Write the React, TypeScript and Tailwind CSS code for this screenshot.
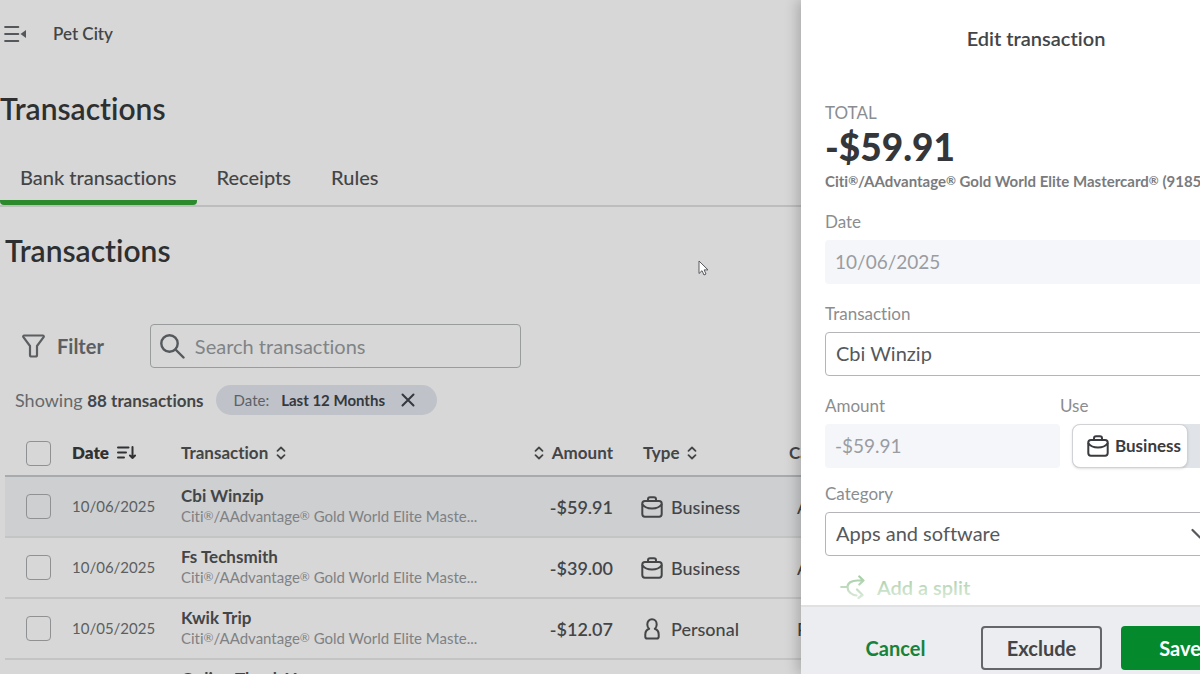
import React from "react";

type Kind = "Business" | "Personal";

type Row = {
  date: string;
  name: string;
  amount: string;
  kind: Kind;
  category: string;
};

const rows: Row[] = [
  { date: "10/06/2025", name: "Cbi Winzip", amount: "-$59.91", kind: "Business", category: "Apps and software" },
  { date: "10/06/2025", name: "Fs Techsmith", amount: "-$39.00", kind: "Business", category: "Apps and software" },
  { date: "10/05/2025", name: "Kwik Trip", amount: "-$12.07", kind: "Personal", category: "Personal" },
  { date: "10/05/2025", name: "Online Thank You", amount: "-$84.20", kind: "Personal", category: "Personal" },
];

function Reg() {
  return <span className="align-[2px] text-[12px] leading-none">®</span>;
}

function Account({ tail }: { tail: React.ReactNode }) {
  return (
    <>
      Citi
      <Reg />
      /AAdvantage
      <Reg /> Gold World Elite {tail}
    </>
  );
}

function Briefcase() {
  return (
    <svg width="22" height="22" viewBox="0 0 22 22" fill="none" stroke="currentColor" strokeWidth="2" strokeLinecap="round" strokeLinejoin="round" aria-hidden="true">
      <rect x="1.300" y="5" width="19.400" height="15.700" rx="2.600" />
      <path d="M7 4.700V3.300c0-1.100.9-2 2-2h4c1.100 0 2 .9 2 2v1.400" />
      <path d="M1.500 8.500c1.800 2.500 5 4 9.500 4s7.700-1.500 9.500-4" />
    </svg>
  );
}

function Person() {
  return (
    <svg width="22" height="22" viewBox="0 0 22 22" fill="none" stroke="currentColor" strokeWidth="2" strokeLinejoin="round" aria-hidden="true">
      <path d="M8.200 10.800C7 9.800 6.300 8.200 6.300 6.400 6.300 3.500 8.200 1.300 11 1.300s4.700 2.200 4.700 5.100c0 1.800-.7 3.400-1.900 4.400 2.400.9 3.900 3 3.900 5.700v2.200c0 1-.8 1.800-1.800 1.800H6.100c-1 0-1.800-.8-1.800-1.800v-2.200c0-2.700 1.500-4.800 3.900-5.700z" />
    </svg>
  );
}

function SortIcon() {
  return (
    <svg width="10" height="14" viewBox="0 0 10 14" fill="none" stroke="currentColor" strokeWidth="1.800" strokeLinecap="round" strokeLinejoin="round" aria-hidden="true">
      <path d="M1.500 4.800L5 1.500l3.500 3.300M1.500 9.200L5 12.500l3.500-3.300" />
    </svg>
  );
}

function Check({ label }: { label: string }) {
  return (
    <input
      type="checkbox"
      aria-label={label}
      className="block size-[25px] appearance-none rounded border border-[#8f9193] checked:bg-[#2a7d2a]"
    />
  );
}

function Tab({ label, active = false }: { label: string; active?: boolean }) {
  return (
    <button
      type="button"
      role="tab"
      aria-selected={active}
      className={
        active
          ? "h-[45px] rounded-sm border-b-[5px] border-[#2c8a2c] px-5 pb-1.5 text-xl leading-7 font-medium"
          : "h-[45px] border-b-[5px] border-transparent px-5 pb-1.5 text-xl leading-7 font-medium"
      }
    >
      {label}
    </button>
  );
}

function Transactions() {
  return (
    <main className="relative min-w-0 flex-1 overflow-hidden bg-[#d7d7d7] text-[#434547]">
      <header className="flex h-[68px] items-center gap-[26px] pl-1">
        <button type="button" aria-label="Collapse menu">
          <svg width="23" height="18" viewBox="0 0 23 18" fill="none" stroke="#55585a" strokeWidth="2.200" strokeLinecap="round" aria-hidden="true">
            <path d="M1.200 2h13M1.200 9h13M1.200 16h13" />
            <path d="M22 5v8l-5.500-4z" fill="#55585a" stroke="none" />
          </svg>
        </button>
        <span className="text-[17px] font-semibold">Pet City</span>
      </header>

      <h1 className="pt-5 text-[30px] leading-10 font-semibold text-[#2d2f31]">Transactions</h1>

      <div role="tablist" className="mt-8 flex border-b-2 border-[#bcbdbd]">
        <Tab label="Bank transactions" active />
        <Tab label="Receipts" />
        <Tab label="Rules" />
      </div>

      <h2 className="pt-[23px] pl-[5px] text-[30px] leading-10 font-semibold text-[#2d2f31]">Transactions</h2>

      <div className="mt-[54px] flex items-center gap-[46px] pl-[22px]">
        <button type="button" className="flex items-center gap-3 text-xl font-bold text-[#5b5f62]">
          <svg width="23" height="24" viewBox="0 0 23 24" fill="none" stroke="currentColor" strokeWidth="2.200" strokeLinejoin="round" aria-hidden="true">
            <path d="M2.200 1.500h18.600c.9 0 1.300 1 .8 1.700L15 12v9c0 1-.6 1.500-1.500 1.500h-4C8.600 22.500 8 22 8 21v-9L1.400 3.200c-.5-.7-.1-1.700.8-1.700z" />
          </svg>
          Filter
        </button>
        <label className="flex h-11 w-[371px] items-center gap-2.5 rounded border border-[#989c9c] px-[9px]">
          <svg width="25" height="25" viewBox="0 0 25 25" fill="none" stroke="#55595c" strokeWidth="2.400" strokeLinecap="round" aria-hidden="true">
            <circle cx="9.500" cy="9.500" r="8.200" />
            <path d="M15.500 15.500l8 8" />
          </svg>
          <input type="search" aria-label="Search transactions" placeholder="Search transactions" className="min-w-0 flex-1 bg-transparent text-xl outline-none placeholder:text-[#808487]" />
        </label>
      </div>

      <div className="mt-[17px] flex h-[30px] items-center gap-3 pl-[15px]">
        <p className="text-lg leading-7 text-[#66696b]">
          Showing <b className="text-[17px] font-bold text-[#434547]">88 transactions</b>
        </p>
        <span className="flex h-[30px] items-center rounded-full bg-[#bfc2c8] pr-[22px] pl-[18px] text-[15px]">
          <span className="mr-3 text-[#5d6167]">Date:</span>
          <span className="mr-4 font-bold text-[#35383c]">Last 12 Months</span>
          <button type="button" aria-label="Remove date filter">
            <svg width="14" height="14" viewBox="0 0 14 14" stroke="#35383c" strokeWidth="2" strokeLinecap="round" className="block" aria-hidden="true">
              <path d="M1.500 1.500l11 11M12.500 1.500l-11 11" />
            </svg>
          </button>
        </span>
      </div>

      <table className="mt-4 ml-[5px] w-[1100px] table-fixed border-collapse text-left">
        <colgroup>
          <col className="w-[67px]" />
          <col className="w-[109px]" />
          <col className="w-[315px]" />
          <col className="w-[117px]" />
          <col className="w-[176px]" />
          <col />
        </colgroup>
        <thead>
          <tr className="h-[45px] border-b-2 border-[#a7abad] text-[17px]">
            <th scope="col" className="pl-[21px]">
              <Check label="Select all transactions" />
            </th>
            <th scope="col" className="font-extrabold text-[#2f3133]">
              <span className="flex items-center gap-2">
                Date
                <svg width="19" height="14" viewBox="0 0 19 14" fill="none" stroke="currentColor" strokeWidth="2" strokeLinecap="round" strokeLinejoin="round" aria-hidden="true">
                  <path d="M1 1.500h10.500M1 6.500h8M1 11.500h6M15.500 1v11M13 9.500l2.500 2.500L18 9.500" />
                </svg>
              </span>
            </th>
            <th scope="col" className="font-bold">
              <span className="flex items-center gap-2">
                Transaction <SortIcon />
              </span>
            </th>
            <th scope="col" className="font-bold">
              <span className="flex items-center justify-end gap-2">
                <SortIcon /> Amount
              </span>
            </th>
            <th scope="col" className="pl-[30px] font-bold">
              <span className="flex items-center gap-2">
                Type <SortIcon />
              </span>
            </th>
            <th scope="col" className="font-bold">Category</th>
          </tr>
        </thead>
        <tbody>
          {rows.map((row, i) => (
            <tr
              key={row.name}
              className={i === 0 ? "h-[61px] border-b-2 border-[#c3c4c4] bg-[#cdcfd1]" : "h-[61px] border-b-2 border-[#c3c4c4]"}
            >
              <td className="pl-[21px]">
                <Check label={`Select ${row.name}`} />
              </td>
              <td className="text-[15px] text-[#5c5f61]">{row.date}</td>
              <td className="pb-0.5">
                <div className="text-[17px] leading-5 font-bold">{row.name}</div>
                <div className="text-[15px] leading-5 whitespace-nowrap text-[#7f8184]">
                  <Account tail="Maste..." />
                </div>
              </td>
              <td className="text-right text-lg leading-6 font-semibold">{row.amount}</td>
              <td className="pl-7">
                <span className="flex items-center gap-2 text-lg leading-6 font-medium">
                  {row.kind === "Business" ? <Briefcase /> : <Person />}
                  {row.kind}
                </span>
              </td>
              <td className="pl-2 text-lg leading-6 font-medium">{row.category}</td>
            </tr>
          ))}
        </tbody>
      </table>

      <svg width="12" height="16" viewBox="0 0 12 16" className="absolute top-[260px] left-[698px]" aria-hidden="true">
        <path d="M1 1v12.500l3-2.800 2 4.300 2-1-1.900-4.100H10z" fill="#fff" stroke="#55585c" strokeWidth="1" />
      </svg>
    </main>
  );
}

function EditPanel() {
  const label = "text-[17px] leading-5 text-[#8b8d90]";
  const readOnly = "mt-2 h-11 w-full rounded bg-[#f4f6f9] px-2.5 pb-0.5 text-[19px] text-[#9a9ca1] outline-none";
  const field = "mt-2 h-11 w-full rounded border border-[#b3b5b8] bg-white px-2.5 pb-0.5 text-xl text-[#56585b] outline-none";
  return (
    <aside className="z-10 w-[399px] shrink-0 overflow-clip bg-white shadow-[-4px_0_12px_rgba(0,0,0,0.2)]">
      <form className="flex h-full w-[470px] flex-col" onSubmit={(e) => e.preventDefault()}>
        <h2 className="py-6 text-center text-xl leading-[29px] font-semibold text-[#434548]">Edit transaction</h2>

        <div className="relative min-h-0 flex-1 overflow-hidden px-6 pt-6">
          <p className="text-[17px] leading-6 text-[#8b8d90]">TOTAL</p>
          <p className="mt-1 text-[37px] leading-9 font-black text-[#343639]">-$59.91</p>
          <p className="mt-1.5 text-[15px] leading-5 font-bold whitespace-nowrap text-[#797b7e]">
            <Account tail={<>Mastercard<Reg /> (9185)</>} />
          </p>

          <div className="mt-[21px] flex flex-col gap-5">
            <div className="flex flex-col">
              <label htmlFor="date" className={label}>Date</label>
              <input id="date" readOnly value="10/06/2025" className={readOnly} />
            </div>
            <div className="flex flex-col">
              <label htmlFor="name" className={label}>Transaction</label>
              <input id="name" defaultValue="Cbi Winzip" className={field} />
            </div>
            <div className="flex">
              <div className="flex w-[235px] flex-col">
                <label htmlFor="amount" className={label}>Amount</label>
                <input id="amount" readOnly value="-$59.91" className={readOnly} />
              </div>
              <div role="group" aria-labelledby="use" className="flex flex-1 flex-col">
                <span id="use" className={label}>Use</span>
                <div className="mt-2 ml-3 flex h-11 rounded-lg bg-[#e0e3e7]">
                  <button type="button" aria-pressed="true" className="flex w-[116px] items-center justify-end gap-1.5 rounded-lg border border-[#d0d2d5] bg-white pr-1.5 text-[17px] font-bold text-[#393b3e] shadow">
                    <Briefcase />
                    Business
                  </button>
                  <button type="button" aria-label="Personal" aria-pressed="false" className="flex flex-1 items-center justify-center">
                    <Person />
                  </button>
                </div>
              </div>
            </div>
          </div>

          <div className="relative mt-4 flex flex-col">
            <label htmlFor="category" className={label}>Category</label>
            <select id="category" className={field + " appearance-none"}>
              <option>Apps and software</option>
            </select>
            <svg width="18" height="12" viewBox="0 0 18 12" fill="none" stroke="#56585b" strokeWidth="2.200" strokeLinecap="round" strokeLinejoin="round" className="pointer-events-none absolute right-[38px] bottom-4" aria-hidden="true">
              <path d="M1.500 2L9 9.500 16.500 2" />
            </svg>
          </div>

          <button type="button" className="mt-[19px] ml-[15px] flex items-center gap-3 text-xl leading-6 font-semibold text-[#2c8a2c]">
            <svg width="25" height="24" viewBox="0 0 25 24" fill="none" stroke="currentColor" strokeWidth="2.200" strokeLinecap="round" strokeLinejoin="round" aria-hidden="true">
              <path d="M1.200 12H7M23 5.500h-5.500C11.500 5.500 7.500 8 7.500 12c0 4.500 4 8 9 8.500M19.300 1.500L23.500 5.500l-4.200 4M17 14.500l5.500 5.500-4 3" />
            </svg>
            Add a split
          </button>
          <div className="pointer-events-none absolute inset-x-0 bottom-0 h-11 bg-linear-to-b from-white/40 to-white/90" />
        </div>

        <footer className="flex shrink-0 gap-[19px] border-t-2 border-[#dfe1e3] bg-[#ebedf0] pt-[19px] pr-8 pb-1 pl-7 text-xl font-bold">
          <button type="button" className="h-11 w-[133px] text-[#16823a]">Cancel</button>
          <button type="button" className="h-11 w-[121px] rounded border-2 border-[#63666b] text-[#434548]">Exclude</button>
          <button type="submit" className="h-11 flex-1 rounded bg-[#048a2c] text-white">Save</button>
        </footer>
      </form>
    </aside>
  );
}

export default function App() {
  return (
    <div className="flex h-screen overflow-hidden font-['Lato',sans-serif] [font-variant-ligatures:no-common-ligatures]">
      <Transactions />
      <EditPanel />
    </div>
  );
}
